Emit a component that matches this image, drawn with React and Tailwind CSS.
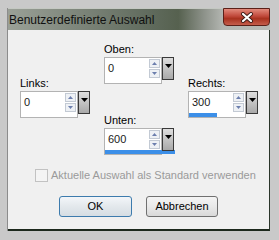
import React from "react";

const font = { fontFamily: '"Liberation Sans", Arial, sans-serif' };

const Spinner = () => (
    <div className="flex flex-col gap-px w-[11px] mr-px">
        <div className="h-[9px] bg-[#eef1f5] border border-[#c3cad4] flex items-center justify-center">
            <svg width="5" height="3" viewBox="0 0 5 3"><path d="M0 3 L2.5 0 L5 3 Z" fill="#6c7fae" /></svg>
        </div>
        <div className="h-[9px] bg-[#eef1f5] border border-[#c3cad4] flex items-center justify-center">
            <svg width="5" height="3" viewBox="0 0 5 3"><path d="M0 0 L2.5 3 L5 0 Z" fill="#6c7fae" /></svg>
        </div>
    </div>
);

const Field = ({ label, value, bar = "w-0" }) => (
    <div className="flex flex-col">
        <div className="text-[11px] leading-[13px] text-black mb-px">{label}</div>
        <div className="flex items-start">
            <div className="w-[58px] h-[27px] border border-[#b3b3b3] bg-white flex flex-col">
                <div className="flex items-center h-[21px]">
                    <span className="flex-1 pl-[3px] text-[11px] leading-[13px] text-[#1a1a1a]">{value}</span>
                    <Spinner />
                </div>
                <div className="flex-1" />
                <div className={`h-[4px] bg-[#3c8fe8] ${bar}`} />
            </div>
            <div className="w-[12px] h-[23px] border border-[#3a3a3a] bg-[linear-gradient(to_bottom,#dedede,#a9a9a9)] flex justify-center pt-[6px]">
                <svg width="7" height="4" viewBox="0 0 7 4"><path d="M0 0 L7 0 L3.5 4 Z" fill="#000" /></svg>
            </div>
        </div>
    </div>
);

export default function App() {
    return (
        <div className="w-[279px] h-[240px] bg-[#c9c9c9] pt-[8px] pl-[7px] pr-[9px] pb-[9px]" style={font}>
            <div className="h-full flex flex-col border-l border-[#8c8c8c]">
                {/* Title bar */}
                <div className="h-[22px] flex items-start bg-[linear-gradient(to_right,#9aa097_0%,#7f877c_25%,#5f6a5c_55%,#56614f_65%,#8e938b_75%,#b3b6b1_82%,#b8bab6_100%)] border-t border-[#c4c8c2]">
                    <div className="flex-1 pl-[1px] pt-[4px] text-[12px] leading-[14px] text-[#101010]">
                        Benutzerdefinierte Auswahl
                    </div>
                    <div className="w-[47px] h-[18px] -mt-px rounded-b-[4px] border border-[#5b2018] bg-[linear-gradient(to_bottom,#e28a7c,#c0483a_45%,#a8321f_60%,#c55d4b)] flex items-center justify-center">
                        <svg width="14" height="11" viewBox="0 0 14 11">
                            <path d="M3 2 L11 9 M11 2 L3 9" stroke="#3b1b17" strokeWidth="4" strokeLinecap="round" />
                            <path d="M3 2 L11 9 M11 2 L3 9" stroke="#ffffff" strokeWidth="2.2" strokeLinecap="round" />
                        </svg>
                    </div>
                </div>

                {/* Content */}
                <div className="flex-1 bg-[#f0f0f0] border-r border-[#2a352a] border-b-2 border-b-[#1c281c] flex flex-col">
                    <div className="flex pl-[12px] pt-[13px] gap-[14px]">
                        <div className="pt-[34px]">
                            <Field label="Links:" value="0" />
                        </div>
                        <div className="flex flex-col gap-[30px]">
                            <Field label="Oben:" value="0" />
                            <Field label="Unten:" value="600" bar="w-[70px]" />
                        </div>
                        <div className="pt-[34px]">
                            <Field label="Rechts:" value="300" bar="w-[28px]" />
                        </div>
                    </div>

                    <div className="flex items-center pl-[27px] mt-[14px] gap-[3px]">
                        <div className="w-[13px] h-[13px] border border-[#c2c2c2] bg-[#f4f4f4]" />
                        <span className="text-[11px] leading-[13px] text-[#9a9a9a]">
                            Aktuelle Auswahl als Standard verwenden
                        </span>
                    </div>

                    <div className="flex pl-[51px] mt-[14px] gap-[14px]">
                        <button className="w-[73px] h-[21px] rounded-[3px] border border-[#3d7bad] bg-[linear-gradient(to_bottom,#f3f6f9,#e3e8ec_50%,#d5dde3)] text-[11px] text-black">
                            OK
                        </button>
                        <button className="w-[72px] h-[21px] rounded-[3px] border border-[#707070] bg-[linear-gradient(to_bottom,#f4f4f4,#e9e9e9_50%,#d9d9d9)] text-[11px] text-black">
                            Abbrechen
                        </button>
                    </div>
                </div>
            </div>
        </div>
    );
}
